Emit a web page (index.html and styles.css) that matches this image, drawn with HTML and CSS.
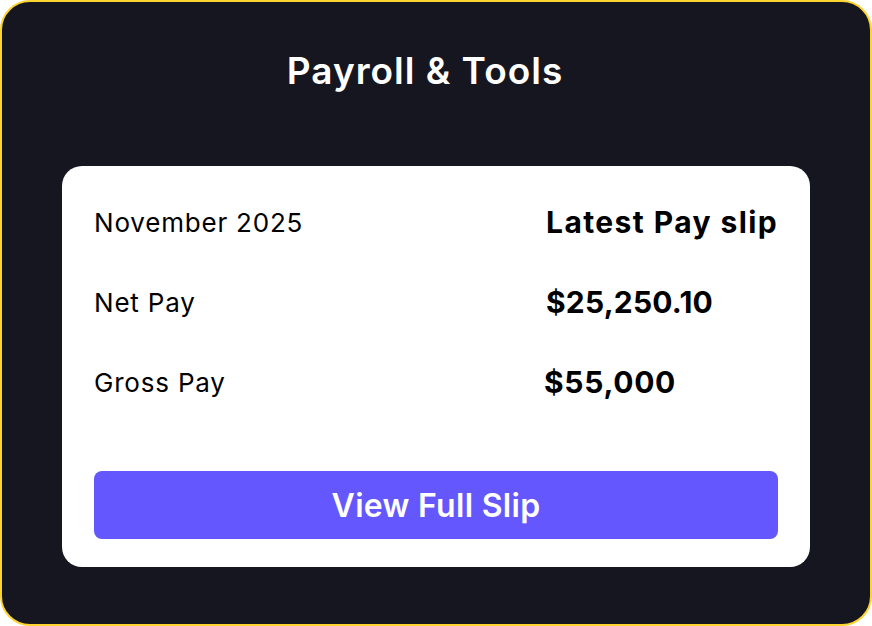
FILE: index.html
```html
<!DOCTYPE html>
<html lang="en">
<head>
<meta charset="UTF-8">
<meta name="viewport" content="width=device-width, initial-scale=1.0">
<title>Payroll &amp; Tools</title>
<link rel="stylesheet" href="styles.css">
</head>
<body>

<div class="frame">
    <h1 class="title">Payroll &amp; Tools</h1>

    <div class="card">
        <div class="rows">
            <div class="label">November 2025</div>
            <div class="value heading">Latest Pay slip</div>

            <div class="label">Net Pay</div>
            <div class="value">$25,250.10</div>

            <div class="label">Gross Pay</div>
            <div class="value gross">$55,000</div>
        </div>

        <button class="slip-btn">View Full Slip</button>
    </div>
</div>

</body>
</html>
```

FILE: styles.css
```css
body {
    font-family: Inter, "Open Sans", sans-serif;
    background-color: #fff;
    margin: 0;
    padding: 0;
}
.frame {
    width: 872px;
    height: 626px;
    box-sizing: border-box;
    border: 2px solid #fdd330;
    border-radius: 30px;
    background-color: #161620;
    padding-top: 46px;
}
.title {
    margin: 0 0 72px;
    padding-right: 22px;
    text-align: center;
    color: #fff;
    font-size: 37px;
    font-weight: 600;
    letter-spacing: 1px;
    line-height: 46px;
}
.card {
    margin: 0 60px;
    height: 401px;
    box-sizing: border-box;
    padding: 16px 32px 28px;
    background-color: #fff;
    border-radius: 20px;
}
.rows {
    display: grid;
    grid-template-columns: 452px 1fr;
    grid-auto-rows: 80px;
    align-items: center;
    color: #000;
}
.label {
    font-size: 26px;
    letter-spacing: 0.8px;
}
.value {
    font-size: 30px;
    font-weight: 700;
    letter-spacing: 0.2px;
}
.heading {
    text-align: right;
    letter-spacing: 1.4px;
}
.gross {
    margin-left: -2px;
    letter-spacing: 0.7px;
}
.slip-btn {
    display: block;
    width: 100%;
    height: 68px;
    margin-top: 49px;
    border: none;
    border-radius: 8px;
    background-color: #6457fe;
    color: #fff;
    font-family: inherit;
    font-size: 32px;
    font-weight: 600;
    letter-spacing: 0.3px;
    cursor: pointer;
}
```
